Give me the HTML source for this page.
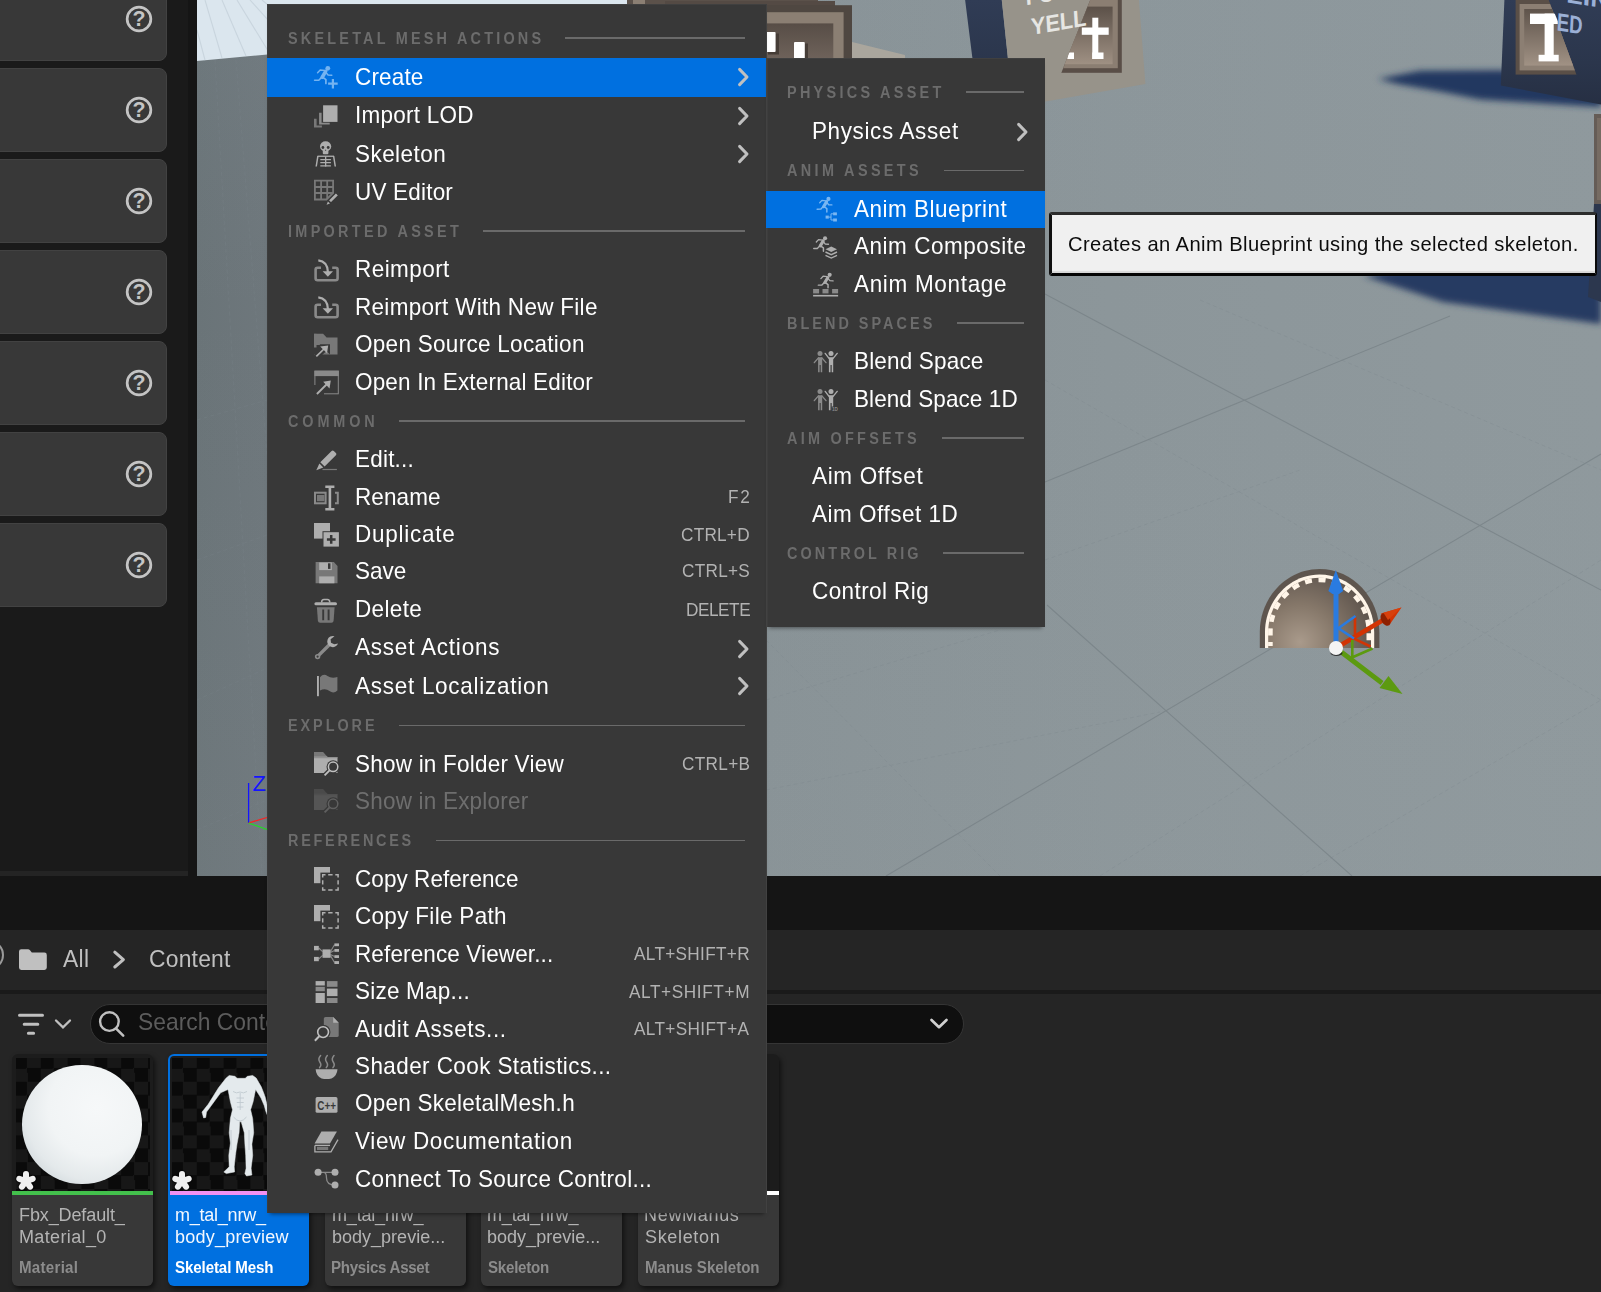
<!DOCTYPE html><html><head><meta charset="utf-8"><title>Unreal Editor</title>
<style>html,body{margin:0;padding:0}body{width:1601px;height:1292px;position:relative;overflow:hidden;background:#151515;font-family:'Liberation Sans',sans-serif}div,svg{box-sizing:border-box}</style></head><body>
<div style="position:absolute;left:0;top:0;width:188px;height:871px;background:#1a1a1a"></div>
<div style="position:absolute;left:0;top:871px;width:188px;height:5px;background:#242424"></div>
<div style="position:absolute;left:-8px;top:-23px;width:175px;height:84px;background:#383838;border:1px solid #424242;border-radius:0 8px 8px 0"></div>
<svg style="position:absolute;left:125.15px;top:4.9px" width="28" height="28" viewBox="0 0 28 28"><circle cx="14" cy="14" r="11.85" fill="none" stroke="#c4c4c4" stroke-width="2.7"/><text x="14" y="21.4" text-anchor="middle" font-family="'Liberation Sans',sans-serif" font-weight="bold" font-size="21.4" fill="#c4c4c4">?</text></svg>
<div style="position:absolute;left:-8px;top:68px;width:175px;height:84px;background:#383838;border:1px solid #424242;border-radius:0 8px 8px 0"></div>
<svg style="position:absolute;left:125.15px;top:95.9px" width="28" height="28" viewBox="0 0 28 28"><circle cx="14" cy="14" r="11.85" fill="none" stroke="#c4c4c4" stroke-width="2.7"/><text x="14" y="21.4" text-anchor="middle" font-family="'Liberation Sans',sans-serif" font-weight="bold" font-size="21.4" fill="#c4c4c4">?</text></svg>
<div style="position:absolute;left:-8px;top:159px;width:175px;height:84px;background:#383838;border:1px solid #424242;border-radius:0 8px 8px 0"></div>
<svg style="position:absolute;left:125.15px;top:186.9px" width="28" height="28" viewBox="0 0 28 28"><circle cx="14" cy="14" r="11.85" fill="none" stroke="#c4c4c4" stroke-width="2.7"/><text x="14" y="21.4" text-anchor="middle" font-family="'Liberation Sans',sans-serif" font-weight="bold" font-size="21.4" fill="#c4c4c4">?</text></svg>
<div style="position:absolute;left:-8px;top:250px;width:175px;height:84px;background:#383838;border:1px solid #424242;border-radius:0 8px 8px 0"></div>
<svg style="position:absolute;left:125.15px;top:277.9px" width="28" height="28" viewBox="0 0 28 28"><circle cx="14" cy="14" r="11.85" fill="none" stroke="#c4c4c4" stroke-width="2.7"/><text x="14" y="21.4" text-anchor="middle" font-family="'Liberation Sans',sans-serif" font-weight="bold" font-size="21.4" fill="#c4c4c4">?</text></svg>
<div style="position:absolute;left:-8px;top:341px;width:175px;height:84px;background:#383838;border:1px solid #424242;border-radius:0 8px 8px 0"></div>
<svg style="position:absolute;left:125.15px;top:368.9px" width="28" height="28" viewBox="0 0 28 28"><circle cx="14" cy="14" r="11.85" fill="none" stroke="#c4c4c4" stroke-width="2.7"/><text x="14" y="21.4" text-anchor="middle" font-family="'Liberation Sans',sans-serif" font-weight="bold" font-size="21.4" fill="#c4c4c4">?</text></svg>
<div style="position:absolute;left:-8px;top:432px;width:175px;height:84px;background:#383838;border:1px solid #424242;border-radius:0 8px 8px 0"></div>
<svg style="position:absolute;left:125.15px;top:459.9px" width="28" height="28" viewBox="0 0 28 28"><circle cx="14" cy="14" r="11.85" fill="none" stroke="#c4c4c4" stroke-width="2.7"/><text x="14" y="21.4" text-anchor="middle" font-family="'Liberation Sans',sans-serif" font-weight="bold" font-size="21.4" fill="#c4c4c4">?</text></svg>
<div style="position:absolute;left:-8px;top:523px;width:175px;height:84px;background:#383838;border:1px solid #424242;border-radius:0 8px 8px 0"></div>
<svg style="position:absolute;left:125.15px;top:550.9px" width="28" height="28" viewBox="0 0 28 28"><circle cx="14" cy="14" r="11.85" fill="none" stroke="#c4c4c4" stroke-width="2.7"/><text x="14" y="21.4" text-anchor="middle" font-family="'Liberation Sans',sans-serif" font-weight="bold" font-size="21.4" fill="#c4c4c4">?</text></svg>
<svg style="position:absolute;left:197px;top:0" width="1404" height="876" viewBox="197 0 1404 876">
<defs>
<linearGradient id="flh" x1="197" y1="0" x2="1601" y2="0" gradientUnits="userSpaceOnUse">
<stop offset="0" stop-color="#6a7478"/><stop offset="0.05" stop-color="#6e777c"/><stop offset="0.405" stop-color="#889296"/><stop offset="0.65" stop-color="#8c969a"/><stop offset="1" stop-color="#8f999d"/></linearGradient>
<linearGradient id="flv" x1="0" y1="0" x2="0" y2="876" gradientUnits="userSpaceOnUse">
<stop offset="0" stop-color="#8e9ba4" stop-opacity="0.12"/><stop offset="0.35" stop-color="#8c969b" stop-opacity="0"/><stop offset="1" stop-color="#a0a8aa" stop-opacity="0.08"/></linearGradient>
<linearGradient id="frm" x1="0" y1="23" x2="0" y2="60" gradientUnits="userSpaceOnUse"><stop offset="0" stop-color="#574d46"/><stop offset="1" stop-color="#6f635b"/></linearGradient>
<linearGradient id="frmT" x1="0" y1="5" x2="0" y2="72" gradientUnits="userSpaceOnUse"><stop offset="0" stop-color="#5a4f47"/><stop offset="1" stop-color="#a8998b"/></linearGradient>
<radialGradient id="dome" cx="1300" cy="642" r="75" gradientUnits="userSpaceOnUse"><stop offset="0" stop-color="#a99a8b"/><stop offset="0.5" stop-color="#857769"/><stop offset="1" stop-color="#5e544d"/></radialGradient>
<linearGradient id="navy" x1="0" y1="0" x2="0" y2="105" gradientUnits="userSpaceOnUse"><stop offset="0" stop-color="#303c55"/><stop offset="0.6" stop-color="#2b364c"/><stop offset="1" stop-color="#262f43"/></linearGradient>
<filter id="b3" x="-20%" y="-20%" width="140%" height="140%"><feGaussianBlur stdDeviation="3"/></filter>
<filter id="b1"><feGaussianBlur stdDeviation="0.6"/></filter>
</defs>
<rect x="197" y="0" width="1404" height="876" fill="url(#flh)"/>
<rect x="197" y="0" width="1404" height="876" fill="url(#flv)"/>
<!-- floor grid lines -->
<g stroke="#6f797e" stroke-width="1.1" opacity="0.55" fill="none">
<path d="M1045 294 L1601 590"/><path d="M1045 482 L1450 316"/><path d="M886 876 L1601 454"/><path d="M1047 605 L1352 876"/>
</g>
<g stroke="#7a848a" stroke-width="1" opacity="0.3" fill="none" stroke-dasharray="4 3">
<path d="M766 700 L1000 630"/><path d="M766 790 L1160 712"/><path d="M1045 380 L1601 700"/><path d="M1100 876 L1601 560"/><path d="M1200 300 L1601 470"/><path d="M1045 560 L1300 470"/><path d="M1300 876 L1601 700"/><path d="M766 640 L1000 876"/>
<path d="M197 420 L267 400"/><path d="M197 560 L267 535"/><path d="M197 700 L267 668"/><path d="M197 830 L267 800"/>
<path d="M215 60 L262 876"/><path d="M236 60 L300 876"/>
</g>
<!-- light wall -->
<polygon points="197,0 660,0 660,18 197,61" fill="#dbe6ee"/>
<g stroke="#c9d5de" stroke-width="1.1" fill="none"><path d="M205 0 L222 58"/><path d="M222 0 L246 56"/><path d="M237 0 L270 54"/><path d="M250 0 L295 50"/><path d="M262 0 L320 48"/><path d="M197 30 L205 60"/></g>
<!-- brown frame object -->
<g>
<rect x="627" y="0" width="191" height="8" fill="#5b514a"/>
<rect x="633" y="0" width="12" height="8" fill="#8b7f73"/>
<rect x="665" y="1" width="170" height="8" fill="#544a44"/>
<rect x="660" y="5.2" width="192" height="60" fill="#4f4741"/>
<rect x="660" y="12.2" width="183.6" height="55" fill="#8b7f73"/>
<rect x="660" y="23.4" width="173.3" height="45" fill="url(#frm)"/>
<rect x="768" y="33.5" width="11" height="21" fill="#463d37"/><rect x="797" y="43.5" width="11" height="16" fill="#463d37"/>
<rect x="764" y="31.9" width="11.6" height="20.1" rx="1" fill="#ffffff"/><rect x="794" y="42" width="10.8" height="17" rx="1" fill="#ffffff"/>
<polygon points="852,42 905,55 905,60 852,60" fill="#aaa69d"/>
</g>
<!-- tan sign with navy side -->
<g>
<polygon points="965.1,0 1001.8,0 1008.2,61 972.8,61" fill="url(#navy)"/>
<polygon points="1001.8,0 1138.9,0 1145.4,84 1040,102.5 1008.2,61" fill="#97938a"/>
<clipPath id="tclip2"><polygon points="1091,-2 1130,-2 1130,80 1058.5,80"/></clipPath>
<g clip-path="url(#tclip2)">
<rect x="1040" y="-6" width="81.8" height="78.8" fill="#594e47"/>
<rect x="1040" y="-2" width="77.8" height="70.2" fill="#8b7e72"/>
<rect x="1040" y="6.6" width="72.6" height="57.6" fill="url(#frmT)"/>
<rect x="1067.4" y="52.5" width="6.6" height="6.5" fill="#ffffff"/>
</g>
<rect x="1081.8" y="27.5" width="26.9" height="7.3" fill="#ffffff"/><rect x="1092.3" y="17.7" width="6" height="41.3" fill="#ffffff"/><rect x="1092.3" y="52.5" width="11.2" height="6.5" fill="#ffffff"/>
<text transform="translate(1031.5,35) rotate(-9.7) skewX(-6)" font-family="'Liberation Sans',sans-serif" font-weight="bold" font-size="23.5" fill="#e6e6e3" textLength="56" lengthAdjust="spacingAndGlyphs">YELL</text>
<text transform="translate(1026,5.2) rotate(-9.7) skewX(-6)" font-family="'Liberation Sans',sans-serif" font-weight="bold" font-size="23.5" fill="#e6e6e3" textLength="56" lengthAdjust="spacingAndGlyphs">FULL</text>
</g>
<!-- right navy sign shadows -->
<polygon points="1378,79 1420,70.8 1503,70.3 1601,98 1601,107 1520,102 1480,99.5 1440,91.5 1400,84.5" fill="#243860" filter="url(#b3)"/>
<polygon points="1364,276 1440,262 1601,262 1601,324 1443,302" fill="#263a62" filter="url(#b3)"/>
<!-- right navy sign -->
<polygon points="1504.4,0 1601,0 1601,104.6 1500.8,85.5" fill="url(#navy)"/>
<clipPath id="tclip"><polygon points="1510,-6 1546.5,-6 1576.6,75 1510,75"/></clipPath>
<g clip-path="url(#tclip)">
<rect x="1515.6" y="-6" width="70" height="80.6" fill="#5a4f47"/>
<rect x="1519.6" y="4" width="66" height="66.4" fill="#8c7f73"/>
<rect x="1524.2" y="9" width="62" height="56.6" fill="url(#frmT)"/>
</g>
<rect x="1530" y="13.6" width="27.8" height="10.4" fill="#ffffff"/><rect x="1544.6" y="13.6" width="9.1" height="47" fill="#ffffff"/><rect x="1538.6" y="54.8" width="20.1" height="6.6" fill="#ffffff"/>
<polygon points="1546.5,-6 1601,-6 1601,90 1582.5,80" fill="url(#navy)"/>
<text transform="translate(1556.4,30.2) rotate(9) skewX(6)" font-family="'Liberation Sans',sans-serif" font-weight="bold" font-size="25" fill="#9bb0d6" textLength="26" lengthAdjust="spacingAndGlyphs">ED</text>
<text transform="translate(1566,2.2) rotate(9) skewX(6)" font-family="'Liberation Sans',sans-serif" font-weight="bold" font-size="25" fill="#9bb0d6" textLength="44" lengthAdjust="spacingAndGlyphs">LIN</text>
<!-- far right object -->
<rect x="1594" y="114" width="8" height="90" fill="#655c56"/><rect x="1597" y="118" width="6" height="82" fill="#766b62"/>
<polygon points="1594,204 1601,204 1601,302 1588,297" fill="#2c374e"/>
<!-- dome -->
<path d="M1259.8 648 V632 C1259.8 598 1286 569 1319.6 569 C1353 569 1379.4 598 1379.4 632 V648 Z" fill="#5e554e"/>
<path d="M1265 648 V632 C1265 601 1289 574.5 1319.6 574.5 C1350 574.5 1374.2 601 1374.2 632 V648 Z" fill="#fff5e8"/>
<path d="M1268.2 648 V632 C1268.2 603 1291 577.7 1319.6 577.7 C1348 577.7 1371 603 1371 632 V648 Z" fill="url(#dome)"/>
<path d="M1270.4 646 V632 C1270.4 604 1292.5 579.9 1319.6 579.9 C1346.5 579.9 1368.8 604 1368.8 632 V646" fill="none" stroke="#fff5e8" stroke-width="4.6" stroke-dasharray="7 6.6" stroke-dashoffset="3"/>
<!-- gizmo -->
<g stroke-linecap="butt">
<path d="M1336 648 L1384 619.5" stroke="#d23404" stroke-width="4.6"/>
<polygon points="1401.5,607.5 1381,613.5 1389,625.5" fill="#d23404"/>
<ellipse cx="1385.5" cy="619.5" rx="4.2" ry="6.8" transform="rotate(-31 1385.5 619.5)" fill="#8e2000"/>
<polygon points="1401.5,607.5 1383.5,612.8 1388,620" fill="#d8400c"/>
<path d="M1355 617 V638 M1353.5 638.3 L1370.5 646.5" stroke="#d23404" stroke-width="2.6"/>
<path d="M1336 648 L1382 683" stroke="#5c9a10" stroke-width="4.8"/>
<polygon points="1402.5,694 1379.5,688 1388.5,676" fill="#5c9a10"/>
<path d="M1352.3 640 V657 M1352 657.5 L1372.5 648.5" stroke="#5c9a10" stroke-width="2.6"/>
<path d="M1336 648 V592" stroke="#2a7be0" stroke-width="5"/>
<polygon points="1335.8,570 1343.2,591 1339,594 1332.5,594 1328.4,591" fill="#2a7be0"/>
<path d="M1338 628.5 L1355.5 616 M1338 628 L1354 638.5" stroke="#2a7be0" stroke-width="2.6"/>
<ellipse cx="1336.5" cy="653" rx="6" ry="3" fill="#1a1a1a" opacity="0.8"/>
<circle cx="1336" cy="648" r="7" fill="#f4f4f4"/>
</g>
<!-- small axis gizmo bottom-left -->
<path d="M248.6 783 V823" stroke="#1414ff" stroke-width="1.3"/>
<path d="M248.6 823 L267 817.5" stroke="#ff2020" stroke-width="1.3"/>
<path d="M248.6 823 L267 829.5" stroke="#20e020" stroke-width="1.3"/>
<text x="252.6" y="790.8" font-family="'Liberation Sans',sans-serif" font-size="22" fill="#1414ff">Z</text>
</svg>

<div style="position:absolute;left:0;top:876px;width:1601px;height:54px;background:#151515"></div>
<div style="position:absolute;left:0;top:930px;width:1601px;height:362px;background:#252525"></div>
<div style="position:absolute;left:0;top:990px;width:1601px;height:4px;background:#1a1a1a"></div>
<div style="position:absolute;left:-22px;top:941px;width:26px;height:28px;border:2.5px solid #9a9a9a;border-radius:50%"></div>
<svg style="position:absolute;left:18px;top:947px" width="30" height="25" viewBox="0 0 30 25"><path d="M1 4.5 Q1 2.2 3.3 2.2 H10 Q11.2 2.2 12 3.2 L13.8 5.6 H26.4 Q28.8 5.6 28.8 8 V20.6 Q28.8 23 26.4 23 H3.3 Q1 23 1 20.6 Z" fill="#c0c0c0"/></svg>
<div style="position:absolute;left:62.60px;top:947.00px;font-size:24.6px;line-height:1;white-space:nowrap;color:#c0c0c0;font-weight:normal;letter-spacing:0.354px;transform:scaleX(0.93);transform-origin:0 0;">All</div>
<svg style="position:absolute;left:112px;top:949px" width="16" height="21" viewBox="0 0 16 21"><path d="M2.8 3.2 L11.4 10.6 L2.8 18" fill="none" stroke="#c0c0c0" stroke-width="3" stroke-linecap="round" stroke-linejoin="round"/></svg>
<div style="position:absolute;left:148.58px;top:947.00px;font-size:24.6px;line-height:1;white-space:nowrap;color:#c0c0c0;font-weight:normal;letter-spacing:0.223px;transform:scaleX(0.93);transform-origin:0 0;">Content</div>
<svg style="position:absolute;left:16px;top:1011px" width="60" height="26" viewBox="0 0 60 26"><path d="M3.5 4.3 H26.5 M8.2 13.3 H21.8 M12.4 22.3 H17.6" stroke="#c0c0c0" stroke-width="3" stroke-linecap="round" fill="none"/><path d="M40 9.5 L47 16.4 L54 9.5" stroke="#c0c0c0" stroke-width="2.3" fill="none" stroke-linecap="round"/></svg>
<div style="position:absolute;left:90px;top:1004px;width:874px;height:40px;background:#0f0f0f;border:1.5px solid #353535;border-radius:20px"></div>
<svg style="position:absolute;left:96px;top:1008px" width="32" height="32" viewBox="0 0 32 32"><circle cx="13.4" cy="13.6" r="9.3" fill="none" stroke="#c0c0c0" stroke-width="2.4"/><path d="M20.2 20.6 L27.2 27.6" stroke="#c0c0c0" stroke-width="2.6" stroke-linecap="round"/></svg>
<div style="position:absolute;left:138.01px;top:1010.00px;font-size:24.6px;line-height:1;white-space:nowrap;color:#5c5c5c;font-weight:normal;letter-spacing:0.000px;transform:scaleX(0.93);transform-origin:0 0;">Search Content</div>
<svg style="position:absolute;left:928px;top:1014px" width="22" height="20" viewBox="0 0 22 20"><path d="M3.5 6 L11 13.2 L18.5 6" stroke="#d0d0d0" stroke-width="2.7" fill="none" stroke-linecap="round" stroke-linejoin="round"/></svg>

<div style="position:absolute;left:12px;top:1054px;width:141px;height:231.5px;border-radius:6px;background:#1c1c1c;box-shadow:2px 3px 5px rgba(0,0,0,0.55)"></div>
<div style="position:absolute;left:15.5px;top:1058px;width:134px;height:133px;background-color:#0b0b0b;background-image:conic-gradient(#171717 25%,#0a0a0a 0 50%,#171717 0 75%,#0a0a0a 0);background-size:26.8px 26.8px;background-position:-2px -3px"></div>
<div style="position:absolute;left:12px;top:1191px;width:141px;height:4.2px;background:#43c04c"></div>
<div style="position:absolute;left:12px;top:1195px;width:141px;height:90.5px;background:#383838;border-radius:0 0 6px 6px"></div>
<div style="position:absolute;left:18.62px;top:1206.00px;font-size:18.8px;line-height:1;white-space:nowrap;color:#b4b4b4;font-weight:normal;letter-spacing:-0.135px;transform:scaleX(0.96);transform-origin:0 0;">Fbx_Default_</div>
<div style="position:absolute;left:18.62px;top:1228.00px;font-size:18.8px;line-height:1;white-space:nowrap;color:#b4b4b4;font-weight:normal;letter-spacing:0.358px;transform:scaleX(0.96);transform-origin:0 0;">Material_0</div>
<div style="position:absolute;left:19.00px;top:1259.80px;font-size:16.8px;line-height:1;white-space:nowrap;color:#8c8c8c;font-weight:bold;letter-spacing:0.300px;transform:scaleX(0.9);transform-origin:0 0;">Material</div>
<div style="position:absolute;left:168px;top:1054px;width:141px;height:231.5px;border-radius:6px;background:#1c1c1c;box-shadow:2px 3px 5px rgba(0,0,0,0.55)"></div>
<div style="position:absolute;left:171.5px;top:1058px;width:134px;height:133px;background-color:#0b0b0b;background-image:conic-gradient(#171717 25%,#0a0a0a 0 50%,#171717 0 75%,#0a0a0a 0);background-size:26.8px 26.8px;background-position:-2px -3px"></div>
<div style="position:absolute;left:168px;top:1191px;width:141px;height:4.2px;background:#f291f2"></div>
<div style="position:absolute;left:168px;top:1195px;width:141px;height:90.5px;background:#0070e0;border-radius:0 0 6px 6px"></div>
<div style="position:absolute;left:168px;top:1054px;width:141px;height:141px;border:2.2px solid #0070e0;border-bottom:none;border-radius:6px 6px 0 0"></div>
<div style="position:absolute;left:174.85px;top:1206.00px;font-size:18.8px;line-height:1;white-space:nowrap;color:#f4f8fe;font-weight:normal;letter-spacing:-0.262px;transform:scaleX(0.96);transform-origin:0 0;">m_tal_nrw_</div>
<div style="position:absolute;left:174.87px;top:1228.00px;font-size:18.8px;line-height:1;white-space:nowrap;color:#f4f8fe;font-weight:normal;letter-spacing:0.214px;transform:scaleX(0.96);transform-origin:0 0;">body_preview</div>
<div style="position:absolute;left:175.28px;top:1259.80px;font-size:16.8px;line-height:1;white-space:nowrap;color:#ffffff;font-weight:bold;letter-spacing:-0.120px;transform:scaleX(0.9);transform-origin:0 0;">Skeletal Mesh</div>
<div style="position:absolute;left:325px;top:1054px;width:141px;height:231.5px;border-radius:6px;background:#1c1c1c;box-shadow:2px 3px 5px rgba(0,0,0,0.55)"></div>
<div style="position:absolute;left:325px;top:1191px;width:141px;height:4.2px;background:#f0a050"></div>
<div style="position:absolute;left:325px;top:1195px;width:141px;height:90.5px;background:#383838;border-radius:0 0 6px 6px"></div>
<div style="position:absolute;left:331.85px;top:1206.00px;font-size:18.8px;line-height:1;white-space:nowrap;color:#b4b4b4;font-weight:normal;letter-spacing:-0.204px;transform:scaleX(0.96);transform-origin:0 0;">m_tal_nrw_</div>
<div style="position:absolute;left:331.87px;top:1228.00px;font-size:18.8px;line-height:1;white-space:nowrap;color:#b4b4b4;font-weight:normal;letter-spacing:-0.007px;transform:scaleX(0.96);transform-origin:0 0;">body_previe...</div>
<div style="position:absolute;left:331.30px;top:1259.80px;font-size:16.8px;line-height:1;white-space:nowrap;color:#8c8c8c;font-weight:bold;letter-spacing:-0.310px;transform:scaleX(0.9);transform-origin:0 0;">Physics Asset</div>
<div style="position:absolute;left:481px;top:1054px;width:141px;height:231.5px;border-radius:6px;background:#1c1c1c;box-shadow:2px 3px 5px rgba(0,0,0,0.55)"></div>
<div style="position:absolute;left:481px;top:1191px;width:141px;height:4.2px;background:#69b4c8"></div>
<div style="position:absolute;left:481px;top:1195px;width:141px;height:90.5px;background:#383838;border-radius:0 0 6px 6px"></div>
<div style="position:absolute;left:487.35px;top:1206.00px;font-size:18.8px;line-height:1;white-space:nowrap;color:#b4b4b4;font-weight:normal;letter-spacing:-0.204px;transform:scaleX(0.96);transform-origin:0 0;">m_tal_nrw_</div>
<div style="position:absolute;left:487.37px;top:1228.00px;font-size:18.8px;line-height:1;white-space:nowrap;color:#b4b4b4;font-weight:normal;letter-spacing:0.001px;transform:scaleX(0.96);transform-origin:0 0;">body_previe...</div>
<div style="position:absolute;left:487.78px;top:1259.80px;font-size:16.8px;line-height:1;white-space:nowrap;color:#8c8c8c;font-weight:bold;letter-spacing:-0.269px;transform:scaleX(0.9);transform-origin:0 0;">Skeleton</div>
<div style="position:absolute;left:638px;top:1054px;width:141px;height:231.5px;border-radius:6px;background:#1c1c1c;box-shadow:2px 3px 5px rgba(0,0,0,0.55)"></div>
<div style="position:absolute;left:638px;top:1191px;width:141px;height:4.2px;background:#ffffff"></div>
<div style="position:absolute;left:638px;top:1195px;width:141px;height:90.5px;background:#383838;border-radius:0 0 6px 6px"></div>
<div style="position:absolute;left:644.32px;top:1206.00px;font-size:18.8px;line-height:1;white-space:nowrap;color:#b4b4b4;font-weight:normal;letter-spacing:0.695px;transform:scaleX(0.96);transform-origin:0 0;">NewManus</div>
<div style="position:absolute;left:644.65px;top:1228.00px;font-size:18.8px;line-height:1;white-space:nowrap;color:#b4b4b4;font-weight:normal;letter-spacing:0.678px;transform:scaleX(0.96);transform-origin:0 0;">Skeleton</div>
<div style="position:absolute;left:644.70px;top:1259.80px;font-size:16.8px;line-height:1;white-space:nowrap;color:#8c8c8c;font-weight:bold;letter-spacing:-0.035px;transform:scaleX(0.9);transform-origin:0 0;">Manus Skeleton</div>
<div style="position:absolute;left:22.2px;top:1064.5px;width:119.6px;height:119.6px;border-radius:50%;background:radial-gradient(circle at 62% 36%,#f6f8f9 0%,#f1f4f5 45%,#e4e9eb 68%,#ccd4d8 88%,#b7c1c6 100%)"></div>
<svg style="position:absolute;left:14.3px;top:1168.5px" width="24" height="24" viewBox="0 0 24 24"><g stroke="#000" stroke-opacity="0.45" stroke-width="8.5" stroke-linecap="round"><path d="M12 5 V12 M5.3 9.8 L12 12 L18.7 9.8 M7.9 17.7 L12 12 L16.1 17.7"/></g><g stroke="#f0f0f0" stroke-width="6" stroke-linecap="round"><path d="M12 5 V12 M5.3 9.8 L12 12 L18.7 9.8 M7.9 17.7 L12 12 L16.1 17.7"/></g></svg>
<svg style="position:absolute;left:170.3px;top:1168.5px" width="24" height="24" viewBox="0 0 24 24"><g stroke="#000" stroke-opacity="0.45" stroke-width="8.5" stroke-linecap="round"><path d="M12 5 V12 M5.3 9.8 L12 12 L18.7 9.8 M7.9 17.7 L12 12 L16.1 17.7"/></g><g stroke="#f0f0f0" stroke-width="6" stroke-linecap="round"><path d="M12 5 V12 M5.3 9.8 L12 12 L18.7 9.8 M7.9 17.7 L12 12 L16.1 17.7"/></g></svg>
<svg style="position:absolute;left:168px;top:1054px" width="141" height="141" viewBox="168 1054 141 141">
<defs><filter id="bb"><feGaussianBlur stdDeviation="0.3"/></filter></defs>
<path d="M229.2 1075.5 L235.0 1076.3 L237.0 1078.3 L245.3 1078.3 L247.3 1076.3 L252.7 1075.5 L256.2 1078.1 L261.4 1087.0 L265.1 1096.7 L267.3 1106.0 L268.4 1112.6 L267.1 1114.6 L265.7 1111.1 L264.2 1105.5 L261.0 1098.1 L255.6 1089.5 L253.1 1101.8 L250.6 1109.7 L252.7 1118.7 L253.7 1132.8 L251.9 1144.1 L252.7 1155.4 L251.1 1168.2 L251.9 1175.0 L246.5 1176.0 L244.9 1173.6 L246.1 1168.2 L245.7 1155.4 L244.9 1144.1 L244.3 1132.8 L241.2 1121.8 L239.7 1121.8 L239.1 1132.8 L237.0 1144.1 L235.4 1155.4 L234.2 1166.8 L234.6 1171.9 L226.3 1173.6 L223.8 1171.9 L229.2 1166.8 L228.8 1155.4 L230.4 1143.1 L229.2 1132.8 L230.4 1118.3 L232.5 1109.7 L230.4 1101.8 L228.0 1089.5 L220.6 1092.8 L211.9 1104.7 L206.5 1112.1 L205.7 1117.5 L203.6 1117.9 L202.0 1112.1 L208.2 1104.3 L218.5 1087.8 L225.9 1078.3 Z" fill="#e4eaed" stroke="#e4eaed" stroke-width="0.5" stroke-linejoin="round" filter="url(#bb)"/>
<g stroke="#b4c0c6" stroke-width="0.9" fill="none" opacity="0.75"><path d="M233 1091.5 Q236.5 1094 240 1092 Q243.5 1094 247 1091.5"/><path d="M240.2 1093 V1110"/><path d="M236.5 1098 H244 M236.8 1102.5 H243.7 M237 1107 H243.4"/><path d="M233.5 1117 Q240 1125 246.5 1117"/><path d="M231 1130 V1150 M249 1130 V1150"/></g>
</svg>
<div style="position:absolute;left:267px;top:4px;width:499.5px;height:1209px;background:#383838;box-shadow:0 4px 4px -3px rgba(0,0,0,0.5), inset 0 1px 0 #404040, inset -1px 0 0 #414141, inset 1px 0 0 #3d3d3d"></div>
<div style="position:absolute;left:267px;top:58px;width:499px;height:39px;background:#0070e0"></div>
<div style="position:absolute;left:287.99px;top:29.90px;font-size:17.2px;line-height:1;white-space:nowrap;color:#6c6c6c;font-weight:bold;letter-spacing:3.813px;transform:scaleX(0.84);transform-origin:0 0;">SKELETAL MESH ACTIONS</div><div style="position:absolute;left:565px;top:37.00px;width:180px;height:2px;background:#6a6a6a"></div>
<div style="position:absolute;left:287.72px;top:223.10px;font-size:17.2px;line-height:1;white-space:nowrap;color:#6c6c6c;font-weight:bold;letter-spacing:3.936px;transform:scaleX(0.84);transform-origin:0 0;">IMPORTED ASSET</div><div style="position:absolute;left:483px;top:230.30px;width:262px;height:1.6px;background:#6a6a6a"></div>
<div style="position:absolute;left:288.10px;top:412.90px;font-size:17.2px;line-height:1;white-space:nowrap;color:#6c6c6c;font-weight:bold;letter-spacing:4.621px;transform:scaleX(0.84);transform-origin:0 0;">COMMON</div><div style="position:absolute;left:399.4px;top:420.00px;width:345.6px;height:2px;background:#6a6a6a"></div>
<div style="position:absolute;left:287.72px;top:717.25px;font-size:17.2px;line-height:1;white-space:nowrap;color:#6c6c6c;font-weight:bold;letter-spacing:3.488px;transform:scaleX(0.84);transform-origin:0 0;">EXPLORE</div><div style="position:absolute;left:399.4px;top:724.70px;width:345.6px;height:1.4px;background:#6a6a6a"></div>
<div style="position:absolute;left:287.72px;top:831.90px;font-size:17.2px;line-height:1;white-space:nowrap;color:#6c6c6c;font-weight:bold;letter-spacing:3.249px;transform:scaleX(0.84);transform-origin:0 0;">REFERENCES</div><div style="position:absolute;left:436.25px;top:839.80px;width:308.75px;height:1.4px;background:#6a6a6a"></div>
<svg style="position:absolute;left:314px;top:65.20px;overflow:visible" width="26" height="27" viewBox="0 0 26 27"><g transform="translate(0,0) scale(1.0)" fill="none" stroke="#74b3f1" stroke-linecap="round" stroke-linejoin="round">
<circle cx="13.8" cy="3.3" r="2.4" fill="#74b3f1" stroke="none"/>
<path d="M11.7 6.4 L8.2 12.2" stroke-width="3.6"/>
<path d="M10.8 5.5 L6.2 4.9 L3.6 7.7" stroke-width="1.5"/>
<path d="M12.3 8 L14.1 10.1 L17.8 10.3" stroke-width="1.5"/>
<path d="M7.6 12.2 L4.8 15.2 L0.6 15.3" stroke-width="1.6"/>
<path d="M8.9 12.4 L11.9 14.6 L11.9 18.4" stroke-width="1.7"/>
</g><path d="M14.1 18.7 H23.7 M18.9 13.9 V23.5" stroke="#74b3f1" stroke-width="2.2" fill="none"/></svg>
<div style="position:absolute;left:354.80px;top:64.70px;font-size:23.8px;line-height:1;white-space:nowrap;color:#ffffff;font-weight:normal;letter-spacing:0.187px;transform:scaleX(0.945);transform-origin:0 0;">Create</div>
<svg style="position:absolute;left:736.8px;top:67.00px" width="13" height="20" viewBox="0 0 13 20"><path d="M2.6 2.4 L10 10 L2.6 17.6" fill="none" stroke="#c0c0c0" stroke-width="3" stroke-linecap="round" stroke-linejoin="round"/></svg>
<svg style="position:absolute;left:314px;top:103.30px;overflow:visible" width="26" height="27" viewBox="0 0 26 27"><path d="M0 15.8 H2.6 V22.6 H7.9 V24.5 H0 Z" fill="#787878"/>
<path d="M5.1 9.8 H7.6 V19.8 H15.7 V21.4 H5.1 Z" fill="#8a8a8a"/>
<rect x="9.1" y="2.3" width="14.4" height="16.6" fill="#aeaeae"/></svg>
<div style="position:absolute;left:354.80px;top:102.80px;font-size:23.8px;line-height:1;white-space:nowrap;color:#ffffff;font-weight:normal;letter-spacing:0.276px;transform:scaleX(0.945);transform-origin:0 0;">Import LOD</div>
<svg style="position:absolute;left:736.8px;top:106.00px" width="13" height="20" viewBox="0 0 13 20"><path d="M2.6 2.4 L10 10 L2.6 17.6" fill="none" stroke="#c0c0c0" stroke-width="3" stroke-linecap="round" stroke-linejoin="round"/></svg>
<svg style="position:absolute;left:314px;top:142.40px;overflow:visible" width="26" height="27" viewBox="0 0 26 27"><ellipse cx="11.6" cy="4.4" rx="5.6" ry="5.1" fill="#aeaeae"/>
<rect x="8.8" y="7" width="5.6" height="5.2" rx="1" fill="#aeaeae"/>
<circle cx="8.9" cy="5.5" r="1.4" fill="#383838"/><circle cx="14.2" cy="5.5" r="1.4" fill="#383838"/>
<path d="M11.6 7.2 L10.9 8.8 H12.3 Z" fill="#383838"/>
<rect x="3.5" y="13.6" width="16.5" height="1.3" fill="#aeaeae"/>
<path d="M3.9 14 L2.2 24.5 M19.6 14 L21.3 24.5" stroke="#aeaeae" stroke-width="1.5" fill="none"/>
<rect x="11" y="14.5" width="1.3" height="10" fill="#aeaeae"/>
<path d="M6.3 17.6 H16.9 M6.3 20.7 H16.9 M6.3 23.9 H16.9" stroke="#aeaeae" stroke-width="1.3"/></svg>
<div style="position:absolute;left:354.80px;top:141.90px;font-size:23.8px;line-height:1;white-space:nowrap;color:#ffffff;font-weight:normal;letter-spacing:0.480px;transform:scaleX(0.945);transform-origin:0 0;">Skeleton</div>
<svg style="position:absolute;left:736.8px;top:143.70px" width="13" height="20" viewBox="0 0 13 20"><path d="M2.6 2.4 L10 10 L2.6 17.6" fill="none" stroke="#c0c0c0" stroke-width="3" stroke-linecap="round" stroke-linejoin="round"/></svg>
<svg style="position:absolute;left:314px;top:180.20px;overflow:visible" width="26" height="27" viewBox="0 0 26 27"><g stroke="#787878" stroke-width="1.8" fill="none">
<path d="M0.9 0.7 H19.1 V13 L12.5 19.5 H0.9 Z"/>
<path d="M7.1 0.7 V19.5 M13.2 0.7 V18.5 M0.9 7 H19.1 M0.9 13 H19.1"/>
</g>
<path d="M14.3 20.3 L21.9 12.7 L24.6 15.4 L17 23 Z" fill="#aeaeae" stroke="#383838" stroke-width="1.2"/>
<path d="M13.9 21.4 L16 23.6 L12.6 24.8 Z" fill="#aeaeae"/></svg>
<div style="position:absolute;left:354.80px;top:179.70px;font-size:23.8px;line-height:1;white-space:nowrap;color:#ffffff;font-weight:normal;letter-spacing:0.213px;transform:scaleX(0.945);transform-origin:0 0;">UV Editor</div>
<svg style="position:absolute;left:314px;top:257.40px;overflow:visible" width="26" height="27" viewBox="0 0 26 27"><path d="M7 10.8 H3.6 Q1.6 10.8 1.6 12.8 V21.2 Q1.6 23.2 3.6 23.2 H21.6 Q23.6 23.2 23.6 21.2 V12.8 Q23.6 10.8 21.6 10.8 H18.2" fill="none" stroke="#8a8a8a" stroke-width="2.6"/>
<path d="M4.3 3.4 Q13.5 4.5 13.9 15" fill="none" stroke="#aeaeae" stroke-width="2.2"/>
<path d="M8.6 14.3 H19 L13.9 19.8 Z" fill="#aeaeae"/></svg>
<div style="position:absolute;left:354.80px;top:256.90px;font-size:23.8px;line-height:1;white-space:nowrap;color:#ffffff;font-weight:normal;letter-spacing:0.471px;transform:scaleX(0.945);transform-origin:0 0;">Reimport</div>
<svg style="position:absolute;left:314px;top:294.10px;overflow:visible" width="26" height="27" viewBox="0 0 26 27"><path d="M7 10.8 H3.6 Q1.6 10.8 1.6 12.8 V21.2 Q1.6 23.2 3.6 23.2 H21.6 Q23.6 23.2 23.6 21.2 V12.8 Q23.6 10.8 21.6 10.8 H18.2" fill="none" stroke="#8a8a8a" stroke-width="2.6"/>
<path d="M4.3 3.4 Q13.5 4.5 13.9 15" fill="none" stroke="#aeaeae" stroke-width="2.2"/>
<path d="M8.6 14.3 H19 L13.9 19.8 Z" fill="#aeaeae"/></svg>
<div style="position:absolute;left:354.80px;top:295.00px;font-size:23.8px;line-height:1;white-space:nowrap;color:#ffffff;font-weight:normal;letter-spacing:0.314px;transform:scaleX(0.945);transform-origin:0 0;">Reimport With New File</div>
<svg style="position:absolute;left:314px;top:332.90px;overflow:visible" width="26" height="27" viewBox="0 0 26 27"><path d="M0 0.8 H9.1 L12.6 4.6 H23.5 V21.4 H0 Z" fill="#787878"/>
<path d="M2.3 23.3 L12 14.2" stroke="#383838" stroke-width="6" fill="none"/>
<path d="M5.5 11.2 H16 V21.4 Z" fill="#383838"/>
<path d="M0 12 H8 V21.4 H0 Z" fill="#383838"/>
<path d="M0 0.8 H2.5 V14.5 H0 Z" fill="#787878"/>
<path d="M2.3 23.3 L11 15" stroke="#aeaeae" stroke-width="1.7" fill="none"/>
<path d="M6.2 13.4 L14.2 12.6 L13 20.2 Z" fill="#aeaeae"/></svg>
<div style="position:absolute;left:354.80px;top:331.90px;font-size:23.8px;line-height:1;white-space:nowrap;color:#ffffff;font-weight:normal;letter-spacing:0.314px;transform:scaleX(0.945);transform-origin:0 0;">Open Source Location</div>
<svg style="position:absolute;left:314px;top:370.50px;overflow:visible" width="26" height="27" viewBox="0 0 26 27"><rect x="0.9" y="0.2" width="23.4" height="22.6" fill="none" stroke="#8a8a8a" stroke-width="1"/>
<rect x="0.4" y="-0.3" width="24.4" height="5.4" fill="#8a8a8a"/>
<path d="M0 14 H10 V24 H0 Z" fill="#383838"/>
<path d="M2.9 23 L14 12" stroke="#aeaeae" stroke-width="1.8" fill="none"/>
<path d="M9.2 10.8 L16.8 9.6 L15.5 17.6 Z" fill="#aeaeae"/></svg>
<div style="position:absolute;left:354.80px;top:370.00px;font-size:23.8px;line-height:1;white-space:nowrap;color:#ffffff;font-weight:normal;letter-spacing:0.194px;transform:scaleX(0.945);transform-origin:0 0;">Open In External Editor</div>
<svg style="position:absolute;left:314px;top:447.40px;overflow:visible" width="26" height="27" viewBox="0 0 26 27"><path d="M6.3 15.3 L17.6 4 Q18.7 2.9 19.8 4 L21.9 6.1 Q23 7.2 21.9 8.3 L10.6 19.6 Z" fill="#aeaeae"/>
<path d="M5.4 16.6 L9.3 20.5 L2.3 23.2 Z" fill="#aeaeae"/>
<rect x="8.5" y="21.9" width="14.4" height="1.2" fill="#787878"/></svg>
<div style="position:absolute;left:354.80px;top:446.90px;font-size:23.8px;line-height:1;white-space:nowrap;color:#ffffff;font-weight:normal;letter-spacing:0.231px;transform:scaleX(0.945);transform-origin:0 0;">Edit...</div>
<svg style="position:absolute;left:314px;top:485.50px;overflow:visible" width="26" height="27" viewBox="0 0 26 27"><rect x="1" y="6.7" width="10.6" height="10.6" fill="none" stroke="#8a8a8a" stroke-width="2"/>
<rect x="3" y="9" width="7.4" height="6.2" fill="#787878"/>
<path d="M21 6.7 H23.8 V17.3 H21" fill="none" stroke="#8a8a8a" stroke-width="2"/>
<path d="M11.3 0.8 H20.4 M11.3 23.2 H20.4 M15.9 0.8 V23.2" stroke="#aeaeae" stroke-width="2.6" fill="none"/></svg>
<div style="position:absolute;left:354.80px;top:485.00px;font-size:23.8px;line-height:1;white-space:nowrap;color:#ffffff;font-weight:normal;letter-spacing:0.111px;transform:scaleX(0.945);transform-origin:0 0;">Rename</div>
<div style="position:absolute;left:728.20px;top:488.10px;font-size:18px;line-height:1;white-space:nowrap;color:#b2b2b2;font-weight:normal;letter-spacing:1.768px;transform:scaleX(0.955);transform-origin:0 0;">F2</div>
<svg style="position:absolute;left:314px;top:522.10px;overflow:visible" width="26" height="27" viewBox="0 0 26 27"><rect x="0" y="1" width="16" height="15.6" fill="#aeaeae"/>
<rect x="8.5" y="9.2" width="17" height="16" fill="#383838"/>
<rect x="9.5" y="10.2" width="15.4" height="14.4" fill="#aeaeae"/>
<path d="M12.9 17.4 H21.6 M17.2 13 V21.8" stroke="#383838" stroke-width="2.5"/></svg>
<div style="position:absolute;left:354.80px;top:521.60px;font-size:23.8px;line-height:1;white-space:nowrap;color:#ffffff;font-weight:normal;letter-spacing:0.794px;transform:scaleX(0.945);transform-origin:0 0;">Duplicate</div>
<div style="position:absolute;left:681.18px;top:526.00px;font-size:18px;line-height:1;white-space:nowrap;color:#b2b2b2;font-weight:normal;letter-spacing:0.256px;transform:scaleX(0.955);transform-origin:0 0;">CTRL+D</div>
<svg style="position:absolute;left:314px;top:559.90px;overflow:visible" width="26" height="27" viewBox="0 0 26 27"><path d="M1.6 2 H19.8 L23.5 6 V23.3 H1.6 Z" fill="#787878"/>
<rect x="5.2" y="2.5" width="12.6" height="7.6" fill="#aeaeae"/>
<rect x="14" y="3.3" width="2.5" height="5.6" fill="#383838"/>
<rect x="5.2" y="16.4" width="15.2" height="6.9" fill="#aeaeae"/></svg>
<div style="position:absolute;left:354.80px;top:559.40px;font-size:23.8px;line-height:1;white-space:nowrap;color:#ffffff;font-weight:normal;letter-spacing:0.043px;transform:scaleX(0.945);transform-origin:0 0;">Save</div>
<div style="position:absolute;left:681.78px;top:562.40px;font-size:18px;line-height:1;white-space:nowrap;color:#b2b2b2;font-weight:normal;letter-spacing:0.288px;transform:scaleX(0.955);transform-origin:0 0;">CTRL+S</div>
<svg style="position:absolute;left:314px;top:597.60px;overflow:visible" width="26" height="27" viewBox="0 0 26 27"><path d="M7.6 4.6 Q7.6 1.6 10 1.6 H13.4 Q15.8 1.6 15.8 4.6" fill="none" stroke="#aeaeae" stroke-width="1.5"/>
<rect x="0.4" y="4.2" width="22.6" height="3.1" rx="1.5" fill="#aeaeae"/>
<path d="M2.9 9.2 H20.6 L19.6 22.8 Q19.4 24.8 17.4 24.8 H6.1 Q4.1 24.8 3.9 22.8 Z" fill="#787878"/>
<path d="M9.2 11.6 V22.2 M14.6 11.6 V22.2" stroke="#383838" stroke-width="1.9"/></svg>
<div style="position:absolute;left:354.80px;top:596.60px;font-size:23.8px;line-height:1;white-space:nowrap;color:#ffffff;font-weight:normal;letter-spacing:0.364px;transform:scaleX(0.945);transform-origin:0 0;">Delete</div>
<div style="position:absolute;left:685.80px;top:601.00px;font-size:18px;line-height:1;white-space:nowrap;color:#b2b2b2;font-weight:normal;letter-spacing:-0.467px;transform:scaleX(0.955);transform-origin:0 0;">DELETE</div>
<svg style="position:absolute;left:314px;top:635.25px;overflow:visible" width="26" height="27" viewBox="0 0 26 27"><path d="M4.2 20.9 L15.6 9.5" stroke="#8a8a8a" stroke-width="3.4" stroke-linecap="round" fill="none"/>
<circle cx="3.6" cy="21.6" r="2.7" fill="#8a8a8a"/><circle cx="3.6" cy="21.6" r="1.1" fill="#383838"/>
<path d="M20.5 1.2 A5.6 5.6 0 1 0 24.1 8.5 L20.3 9.3 L17 7.8 L16.6 4.3 Z" fill="#aeaeae"/></svg>
<div style="position:absolute;left:354.80px;top:634.75px;font-size:23.8px;line-height:1;white-space:nowrap;color:#ffffff;font-weight:normal;letter-spacing:0.835px;transform:scaleX(0.945);transform-origin:0 0;">Asset Actions</div>
<svg style="position:absolute;left:736.8px;top:638.50px" width="13" height="20" viewBox="0 0 13 20"><path d="M2.6 2.4 L10 10 L2.6 17.6" fill="none" stroke="#c0c0c0" stroke-width="3" stroke-linecap="round" stroke-linejoin="round"/></svg>
<svg style="position:absolute;left:314px;top:673.10px;overflow:visible" width="26" height="27" viewBox="0 0 26 27"><rect x="3" y="3" width="1.9" height="20.2" fill="#aeaeae"/>
<path d="M6 4.2 Q9.5 0.2 13.5 3 T 23.4 4 V17.5 Q19.5 21 15.5 18 T 6 17.4 Z" fill="#787878"/></svg>
<div style="position:absolute;left:354.80px;top:674.00px;font-size:23.8px;line-height:1;white-space:nowrap;color:#ffffff;font-weight:normal;letter-spacing:0.775px;transform:scaleX(0.945);transform-origin:0 0;">Asset Localization</div>
<svg style="position:absolute;left:736.8px;top:676.30px" width="13" height="20" viewBox="0 0 13 20"><path d="M2.6 2.4 L10 10 L2.6 17.6" fill="none" stroke="#c0c0c0" stroke-width="3" stroke-linecap="round" stroke-linejoin="round"/></svg>
<svg style="position:absolute;left:314px;top:752.10px;overflow:visible" width="26" height="27" viewBox="0 0 26 27"><path d="M0 0 H9.1 L12.9 4.2 H0 Z" fill="#787878"/>
<path d="M0 4.2 H12.9 L13.6 5 H23.5 V21 H0 Z" fill="#aeaeae"/>
<path d="M0 4.2 H12.9 L13.6 5 H23.5 V6.2 H0 Z" fill="#787878" opacity="0.55"/>
<circle cx="19.1" cy="14.8" r="6.6" fill="#383838"/>
<path d="M15.6 18.3 L10.6 23.4" stroke="#383838" stroke-width="4.4" fill="none"/>
<circle cx="19.1" cy="14.8" r="4.7" fill="none" stroke="#c0c0c0" stroke-width="1.5"/>
<path d="M15.6 18.3 L10.6 23.4" stroke="#c0c0c0" stroke-width="1.8" fill="none"/></svg>
<div style="position:absolute;left:354.80px;top:751.60px;font-size:23.8px;line-height:1;white-space:nowrap;color:#ffffff;font-weight:normal;letter-spacing:0.238px;transform:scaleX(0.945);transform-origin:0 0;">Show in Folder View</div>
<div style="position:absolute;left:681.78px;top:755.00px;font-size:18px;line-height:1;white-space:nowrap;color:#b2b2b2;font-weight:normal;letter-spacing:0.349px;transform:scaleX(0.955);transform-origin:0 0;">CTRL+B</div>
<svg style="position:absolute;left:314px;top:789.25px;overflow:visible" width="26" height="27" viewBox="0 0 26 27"><path d="M0 0 H9.1 L12.9 4.2 H0 Z" fill="#4a4a4a"/>
<path d="M0 4.2 H12.9 L13.6 5 H23.5 V21 H0 Z" fill="#555555"/>
<path d="M0 4.2 H12.9 L13.6 5 H23.5 V6.2 H0 Z" fill="#4a4a4a" opacity="0.55"/>
<circle cx="19.1" cy="14.8" r="6.6" fill="#383838"/>
<path d="M15.6 18.3 L10.6 23.4" stroke="#383838" stroke-width="4.4" fill="none"/>
<circle cx="19.1" cy="14.8" r="4.7" fill="none" stroke="#606060" stroke-width="1.5"/>
<path d="M15.6 18.3 L10.6 23.4" stroke="#606060" stroke-width="1.8" fill="none"/></svg>
<div style="position:absolute;left:354.80px;top:788.75px;font-size:23.8px;line-height:1;white-space:nowrap;color:#6e6e6e;font-weight:normal;letter-spacing:0.225px;transform:scaleX(0.945);transform-origin:0 0;">Show in Explorer</div>
<svg style="position:absolute;left:314px;top:867.40px;overflow:visible" width="26" height="27" viewBox="0 0 26 27"><rect x="0" y="0" width="16" height="16.2" fill="#aeaeae"/>
<rect x="6.4" y="5.6" width="19" height="19" fill="#383838"/>
<path d="M8.7 10.5 V7.8 H11.5 M14.2 7.8 H18.6 M21.3 7.8 H24.1 V10.5 M24.1 13.2 V17.6 M24.1 20.3 V23 H21.3 M18.6 23 H14.2 M11.5 23 H8.7 V20.3 M8.7 17.6 V13.2" fill="none" stroke="#aeaeae" stroke-width="1.5"/></svg>
<div style="position:absolute;left:354.80px;top:866.90px;font-size:23.8px;line-height:1;white-space:nowrap;color:#ffffff;font-weight:normal;letter-spacing:0.072px;transform:scaleX(0.945);transform-origin:0 0;">Copy Reference</div>
<svg style="position:absolute;left:314px;top:904.60px;overflow:visible" width="26" height="27" viewBox="0 0 26 27"><rect x="0" y="0" width="16" height="16.2" fill="#aeaeae"/>
<rect x="6.4" y="5.6" width="19" height="19" fill="#383838"/>
<path d="M8.7 10.5 V7.8 H11.5 M14.2 7.8 H18.6 M21.3 7.8 H24.1 V10.5 M24.1 13.2 V17.6 M24.1 20.3 V23 H21.3 M18.6 23 H14.2 M11.5 23 H8.7 V20.3 M8.7 17.6 V13.2" fill="none" stroke="#aeaeae" stroke-width="1.5"/></svg>
<div style="position:absolute;left:354.80px;top:904.10px;font-size:23.8px;line-height:1;white-space:nowrap;color:#ffffff;font-weight:normal;letter-spacing:0.332px;transform:scaleX(0.945);transform-origin:0 0;">Copy File Path</div>
<svg style="position:absolute;left:314px;top:942.40px;overflow:visible" width="26" height="27" viewBox="0 0 26 27"><g stroke="#8a8a8a" stroke-width="1.1" fill="none">
<path d="M4.7 6 L8.6 9.6 M4.7 17 L8.6 13.4 M16.5 9.5 L20.5 2.8 M16.5 10.6 L20.5 8.4 M16.5 12.6 L20.5 14.6 M16.5 13.6 L20.5 20.5"/></g>
<rect x="8.5" y="7.4" width="8.1" height="8.4" fill="#aeaeae"/>
<rect x="0" y="3.9" width="4.8" height="4.4" fill="#aeaeae"/><rect x="0" y="14.9" width="4.8" height="4.3" fill="#aeaeae"/>
<rect x="20.4" y="1.4" width="4.6" height="2.8" fill="#aeaeae"/><rect x="20.4" y="7" width="4.6" height="2.8" fill="#aeaeae"/>
<rect x="20.4" y="13.2" width="4.6" height="2.8" fill="#aeaeae"/><rect x="20.4" y="19.1" width="4.6" height="2.9" fill="#aeaeae"/></svg>
<div style="position:absolute;left:354.80px;top:941.90px;font-size:23.8px;line-height:1;white-space:nowrap;color:#ffffff;font-weight:normal;letter-spacing:0.142px;transform:scaleX(0.945);transform-origin:0 0;">Reference Viewer...</div>
<div style="position:absolute;left:634.42px;top:945.00px;font-size:18px;line-height:1;white-space:nowrap;color:#b2b2b2;font-weight:normal;letter-spacing:0.338px;transform:scaleX(0.955);transform-origin:0 0;">ALT+SHIFT+R</div>
<svg style="position:absolute;left:314px;top:979.50px;overflow:visible" width="26" height="27" viewBox="0 0 26 27"><rect x="1.6" y="1.1" width="9.2" height="4.4" fill="#aeaeae"/>
<rect x="1.6" y="6.8" width="9.2" height="4.4" fill="#8a8a8a"/>
<rect x="1.6" y="13" width="9.2" height="10" fill="#aeaeae"/>
<rect x="12.9" y="1.1" width="10.6" height="5.7" fill="#8a8a8a"/>
<rect x="12.9" y="8.6" width="10.6" height="7.5" fill="#aeaeae"/>
<rect x="12.9" y="18" width="10.6" height="5" fill="#8a8a8a"/></svg>
<div style="position:absolute;left:354.80px;top:979.00px;font-size:23.8px;line-height:1;white-space:nowrap;color:#ffffff;font-weight:normal;letter-spacing:0.234px;transform:scaleX(0.945);transform-origin:0 0;">Size Map...</div>
<div style="position:absolute;left:629.42px;top:983.10px;font-size:18px;line-height:1;white-space:nowrap;color:#b2b2b2;font-weight:normal;letter-spacing:0.645px;transform:scaleX(0.955);transform-origin:0 0;">ALT+SHIFT+M</div>
<svg style="position:absolute;left:314px;top:1017.40px;overflow:visible" width="26" height="27" viewBox="0 0 26 27"><path d="M11.5 0 H19.2 L24.7 5.8 V18.4 Q24.7 20.1 23 20.1 H11.5 Q9.8 20.1 9.8 18.4 V1.7 Q9.8 0 11.5 0 Z" fill="#787878"/>
<path d="M19.2 0 L24.7 5.8 H19.2 Z" fill="#aeaeae"/>
<circle cx="9.1" cy="15.1" r="7.4" fill="#383838"/>
<circle cx="9.1" cy="15.1" r="5.4" fill="none" stroke="#c0c0c0" stroke-width="1.6"/>
<path d="M5.2 19.3 L0.9 23.7" stroke="#c0c0c0" stroke-width="2" fill="none"/></svg>
<div style="position:absolute;left:354.80px;top:1016.90px;font-size:23.8px;line-height:1;white-space:nowrap;color:#ffffff;font-weight:normal;letter-spacing:0.643px;transform:scaleX(0.945);transform-origin:0 0;">Audit Assets...</div>
<div style="position:absolute;left:634.42px;top:1020.40px;font-size:18px;line-height:1;white-space:nowrap;color:#b2b2b2;font-weight:normal;letter-spacing:0.377px;transform:scaleX(0.955);transform-origin:0 0;">ALT+SHIFT+A</div>
<svg style="position:absolute;left:314px;top:1054.25px;overflow:visible" width="26" height="27" viewBox="0 0 26 27"><path d="M1.6 15.2 H23.5 Q23 22 17.5 24.4 Q12.5 25.8 7.6 24.4 Q2.1 22 1.6 15.2 Z" fill="#aeaeae"/>
<g fill="none" stroke="#8a8a8a" stroke-width="1.5" stroke-linecap="round">
<path d="M6.6 1.6 Q3.6 5 5.8 8 T5.6 13.6"/><path d="M13.3 1.6 Q10.3 5 12.5 8 T12.3 13.6"/><path d="M20 1.6 Q17 5 19.2 8 T19 13.6"/></g></svg>
<div style="position:absolute;left:354.80px;top:1053.75px;font-size:23.8px;line-height:1;white-space:nowrap;color:#ffffff;font-weight:normal;letter-spacing:0.436px;transform:scaleX(0.945);transform-origin:0 0;">Shader Cook Statistics...</div>
<svg style="position:absolute;left:314px;top:1091.75px;overflow:visible" width="26" height="27" viewBox="0 0 26 27"><rect x="1.6" y="5.1" width="21.9" height="15.7" rx="1.6" fill="#aeaeae"/>
<text x="12.6" y="17.7" text-anchor="middle" font-family="'Liberation Sans',sans-serif" font-weight="bold" font-size="13.6" textLength="18.6" lengthAdjust="spacingAndGlyphs" fill="#383838">C++</text></svg>
<div style="position:absolute;left:354.80px;top:1091.25px;font-size:23.8px;line-height:1;white-space:nowrap;color:#ffffff;font-weight:normal;letter-spacing:0.272px;transform:scaleX(0.945);transform-origin:0 0;">Open SkeletalMesh.h</div>
<svg style="position:absolute;left:314px;top:1129.25px;overflow:visible" width="26" height="27" viewBox="0 0 26 27"><path d="M7.4 2.6 H22.9 L16 14.6 H0.6 Z" fill="#aeaeae"/>
<path d="M0.9 16.4 V22.9 H17 L24 10.6" fill="none" stroke="#aeaeae" stroke-width="1.3"/>
<path d="M0.9 16.4 H16" fill="none" stroke="#aeaeae" stroke-width="1.3"/>
<rect x="3" y="17.8" width="11.2" height="3.2" fill="#787878"/></svg>
<div style="position:absolute;left:354.80px;top:1128.75px;font-size:23.8px;line-height:1;white-space:nowrap;color:#ffffff;font-weight:normal;letter-spacing:0.705px;transform:scaleX(0.945);transform-origin:0 0;">View Documentation</div>
<svg style="position:absolute;left:314px;top:1167.00px;overflow:visible" width="26" height="27" viewBox="0 0 26 27"><path d="M4.1 5.3 H21 M9.5 5.3 Q12.5 5.3 12.5 11 Q12.5 18 21 18" fill="none" stroke="#8a8a8a" stroke-width="1.3"/>
<circle cx="4.1" cy="5.3" r="3.5" fill="#aeaeae"/><circle cx="21" cy="5.3" r="3.5" fill="#aeaeae"/><circle cx="21" cy="18" r="3.5" fill="#aeaeae"/></svg>
<div style="position:absolute;left:354.80px;top:1166.50px;font-size:23.8px;line-height:1;white-space:nowrap;color:#ffffff;font-weight:normal;letter-spacing:0.333px;transform:scaleX(0.945);transform-origin:0 0;">Connect To Source Control...</div>
<div style="position:absolute;left:766px;top:58px;width:279px;height:569px;background:#383838;box-shadow:0 4px 4px -3px rgba(0,0,0,0.45), inset 1.5px 0 0 #424242, inset 0 1px 0 #404040"></div>
<div style="position:absolute;left:766px;top:191px;width:279px;height:37px;background:#0070e0"></div>
<div style="position:absolute;left:786.72px;top:83.90px;font-size:17.2px;line-height:1;white-space:nowrap;color:#6c6c6c;font-weight:bold;letter-spacing:3.899px;transform:scaleX(0.84);transform-origin:0 0;">PHYSICS ASSET</div><div style="position:absolute;left:966px;top:91.40px;width:58px;height:1.6px;background:#6a6a6a"></div>
<div style="position:absolute;left:787.29px;top:161.90px;font-size:17.2px;line-height:1;white-space:nowrap;color:#6c6c6c;font-weight:bold;letter-spacing:3.989px;transform:scaleX(0.84);transform-origin:0 0;">ANIM ASSETS</div><div style="position:absolute;left:944.4px;top:169.80px;width:79.60000000000002px;height:1.4px;background:#6a6a6a"></div>
<div style="position:absolute;left:786.72px;top:314.75px;font-size:17.2px;line-height:1;white-space:nowrap;color:#6c6c6c;font-weight:bold;letter-spacing:3.596px;transform:scaleX(0.84);transform-origin:0 0;">BLEND SPACES</div><div style="position:absolute;left:956.9px;top:322.40px;width:67.10000000000002px;height:1.6px;background:#6a6a6a"></div>
<div style="position:absolute;left:787.29px;top:429.75px;font-size:17.2px;line-height:1;white-space:nowrap;color:#6c6c6c;font-weight:bold;letter-spacing:3.887px;transform:scaleX(0.84);transform-origin:0 0;">AIM OFFSETS</div><div style="position:absolute;left:942.25px;top:437.20px;width:81.75px;height:1.6px;background:#6a6a6a"></div>
<div style="position:absolute;left:787.10px;top:544.75px;font-size:17.2px;line-height:1;white-space:nowrap;color:#6c6c6c;font-weight:bold;letter-spacing:3.657px;transform:scaleX(0.84);transform-origin:0 0;">CONTROL RIG</div><div style="position:absolute;left:943px;top:552.20px;width:81px;height:1.6px;background:#6a6a6a"></div>
<div style="position:absolute;left:811.80px;top:119.00px;font-size:23.8px;line-height:1;white-space:nowrap;color:#ffffff;font-weight:normal;letter-spacing:0.660px;transform:scaleX(0.945);transform-origin:0 0;">Physics Asset</div>
<svg style="position:absolute;left:1015.8px;top:121.50px" width="13" height="20" viewBox="0 0 13 20"><path d="M2.6 2.4 L10 10 L2.6 17.6" fill="none" stroke="#c0c0c0" stroke-width="3" stroke-linecap="round" stroke-linejoin="round"/></svg>
<svg style="position:absolute;left:813px;top:197.40px;overflow:visible" width="26" height="27" viewBox="0 0 26 27"><g transform="translate(3.6,-0.9) scale(0.86)" fill="none" stroke="#79b6f2" stroke-linecap="round" stroke-linejoin="round">
<circle cx="13.8" cy="3.3" r="2.4" fill="#79b6f2" stroke="none"/>
<path d="M11.7 6.4 L8.2 12.2" stroke-width="3.6"/>
<path d="M10.8 5.5 L6.2 4.9 L3.6 7.7" stroke-width="1.5"/>
<path d="M12.3 8 L14.1 10.1 L17.8 10.3" stroke-width="1.5"/>
<path d="M7.6 12.2 L4.8 15.2 L0.6 15.3" stroke-width="1.6"/>
<path d="M8.9 12.4 L11.9 14.6 L11.9 18.4" stroke-width="1.7"/>
</g><g fill="#79b6f2"><rect x="12.6" y="18.6" width="3.2" height="3"/><rect x="20.1" y="15.4" width="3.8" height="2.9"/><rect x="20.1" y="21.5" width="3.8" height="3"/></g>
<path d="M15.8 20.1 H18 M20.1 16.8 H18 V23 H20.1" fill="none" stroke="#79b6f2" stroke-width="1"/></svg>
<div style="position:absolute;left:854.00px;top:196.90px;font-size:23.8px;line-height:1;white-space:nowrap;color:#ffffff;font-weight:normal;letter-spacing:0.538px;transform:scaleX(0.945);transform-origin:0 0;">Anim Blueprint</div>
<svg style="position:absolute;left:813px;top:234.50px;overflow:visible" width="26" height="27" viewBox="0 0 26 27"><g transform="translate(0.2,0.4) scale(0.86)" fill="none" stroke="#aeaeae" stroke-linecap="round" stroke-linejoin="round">
<circle cx="13.8" cy="3.3" r="2.4" fill="#aeaeae" stroke="none"/>
<path d="M11.7 6.4 L8.2 12.2" stroke-width="3.6"/>
<path d="M10.8 5.5 L6.2 4.9 L3.6 7.7" stroke-width="1.5"/>
<path d="M12.3 8 L14.1 10.1 L17.8 10.3" stroke-width="1.5"/>
<path d="M7.6 12.2 L4.8 15.2 L0.6 15.3" stroke-width="1.6"/>
<path d="M8.9 12.4 L11.9 14.6 L11.9 18.4" stroke-width="1.7"/>
</g><path d="M18.25 11.6 L24 14.3 L18.25 17 L12.5 14.3 Z" fill="#aeaeae"/>
<path d="M12.5 17 L18.25 19.7 L24 17 M12.5 20.4 L18.25 23.1 L24 20.4" fill="none" stroke="#aeaeae" stroke-width="1.4"/></svg>
<div style="position:absolute;left:854.00px;top:234.00px;font-size:23.8px;line-height:1;white-space:nowrap;color:#ffffff;font-weight:normal;letter-spacing:0.572px;transform:scaleX(0.945);transform-origin:0 0;">Anim Composite</div>
<svg style="position:absolute;left:813px;top:272.40px;overflow:visible" width="26" height="27" viewBox="0 0 26 27"><g transform="translate(4.8,0) scale(0.86)" fill="none" stroke="#aeaeae" stroke-linecap="round" stroke-linejoin="round">
<circle cx="13.8" cy="3.3" r="2.4" fill="#aeaeae" stroke="none"/>
<path d="M11.7 6.4 L8.2 12.2" stroke-width="3.6"/>
<path d="M10.8 5.5 L6.2 4.9 L3.6 7.7" stroke-width="1.5"/>
<path d="M12.3 8 L14.1 10.1 L17.8 10.3" stroke-width="1.5"/>
<path d="M7.6 12.2 L4.8 15.2 L0.6 15.3" stroke-width="1.6"/>
<path d="M8.9 12.4 L11.9 14.6 L11.9 18.4" stroke-width="1.7"/>
</g><rect x="0.1" y="17" width="6" height="4.4" fill="#8a8a8a"/><rect x="9.5" y="17" width="6" height="4.4" fill="#8a8a8a"/><rect x="19.1" y="17" width="6" height="4.4" fill="#8a8a8a"/>
<rect x="0.1" y="22.9" width="25" height="1.6" fill="#aeaeae"/></svg>
<div style="position:absolute;left:854.00px;top:271.90px;font-size:23.8px;line-height:1;white-space:nowrap;color:#ffffff;font-weight:normal;letter-spacing:0.724px;transform:scaleX(0.945);transform-origin:0 0;">Anim Montage</div>
<svg style="position:absolute;left:813px;top:349.25px;overflow:visible" width="26" height="27" viewBox="0 0 26 27"><g fill="#8a8a8a" stroke="#8a8a8a"><circle cx="7" cy="4.6" r="2.5" stroke="none"/>
<path d="M5.1 8.2 H9.2 V23.3 H7.7 V16 H6.6 V23.3 H5.1 Z" stroke="none"/>
<path d="M5.4 8.9 L1.3 13.6 M8.9 8.9 L13 13.6" stroke-width="1.4" fill="none" stroke-linecap="round"/></g>
<g fill="#aeaeae" stroke="#aeaeae"><circle cx="18" cy="4.6" r="2.5" stroke="none"/>
<path d="M15.9 8.2 H20.2 V23.3 H18.7 V16 H17.5 V23.3 H15.9 Z" stroke="none"/>
<path d="M16.2 9.6 L12.2 4.4 M19.9 9.6 L24.2 4.4" stroke-width="1.4" fill="none" stroke-linecap="round"/></g></svg>
<div style="position:absolute;left:854.00px;top:348.75px;font-size:23.8px;line-height:1;white-space:nowrap;color:#ffffff;font-weight:normal;letter-spacing:0.189px;transform:scaleX(0.945);transform-origin:0 0;">Blend Space</div>
<svg style="position:absolute;left:813px;top:387.00px;overflow:visible" width="26" height="27" viewBox="0 0 26 27"><g fill="#8a8a8a" stroke="#8a8a8a"><circle cx="7" cy="4.6" r="2.5" stroke="none"/>
<path d="M5.1 8.2 H9.2 V23.3 H7.7 V16 H6.6 V23.3 H5.1 Z" stroke="none"/>
<path d="M5.4 8.9 L1.3 13.6 M8.9 8.9 L13 13.6" stroke-width="1.4" fill="none" stroke-linecap="round"/></g>
<g fill="#aeaeae" stroke="#aeaeae"><circle cx="18" cy="4.6" r="2.5" stroke="none"/>
<path d="M15.9 8.2 H20.2 V23.3 H18.7 V16 H17.5 V23.3 H15.9 Z" stroke="none"/>
<path d="M16.2 9.6 L12.2 4.4 M19.9 9.6 L24.2 4.4" stroke-width="1.4" fill="none" stroke-linecap="round"/></g><rect x="18.4" y="19.5" width="7" height="5" fill="#383838"/><text x="19" y="24.3" font-family="'Liberation Sans',sans-serif" font-weight="bold" font-size="4.6" fill="#8a8a8a">1D</text></svg>
<div style="position:absolute;left:854.00px;top:386.50px;font-size:23.8px;line-height:1;white-space:nowrap;color:#ffffff;font-weight:normal;letter-spacing:0.090px;transform:scaleX(0.945);transform-origin:0 0;">Blend Space 1D</div>
<div style="position:absolute;left:811.80px;top:463.75px;font-size:23.8px;line-height:1;white-space:nowrap;color:#ffffff;font-weight:normal;letter-spacing:0.719px;transform:scaleX(0.945);transform-origin:0 0;">Aim Offset</div>
<div style="position:absolute;left:811.80px;top:501.90px;font-size:23.8px;line-height:1;white-space:nowrap;color:#ffffff;font-weight:normal;letter-spacing:0.556px;transform:scaleX(0.945);transform-origin:0 0;">Aim Offset 1D</div>
<div style="position:absolute;left:811.80px;top:578.75px;font-size:23.8px;line-height:1;white-space:nowrap;color:#ffffff;font-weight:normal;letter-spacing:0.443px;transform:scaleX(0.945);transform-origin:0 0;">Control Rig</div>
<div style="position:absolute;left:1048.7px;top:212.4px;width:548.6px;height:63.8px;background:#f0f0f0;border-style:solid;border-color:#2c2c2c #0a0a0a #040404 #101010;border-width:3px 2.6px 3.6px 3.1px;border-radius:3px;box-shadow:inset 0 -2px 1px rgba(0,0,0,0.10)"></div>
<div style="position:absolute;left:1067.91px;top:233.60px;font-size:20.8px;line-height:1;white-space:nowrap;color:#0c0c0c;font-weight:normal;letter-spacing:0.416px;transform:scaleX(0.97);transform-origin:0 0;">Creates an Anim Blueprint using the selected skeleton.</div>
</body></html>
